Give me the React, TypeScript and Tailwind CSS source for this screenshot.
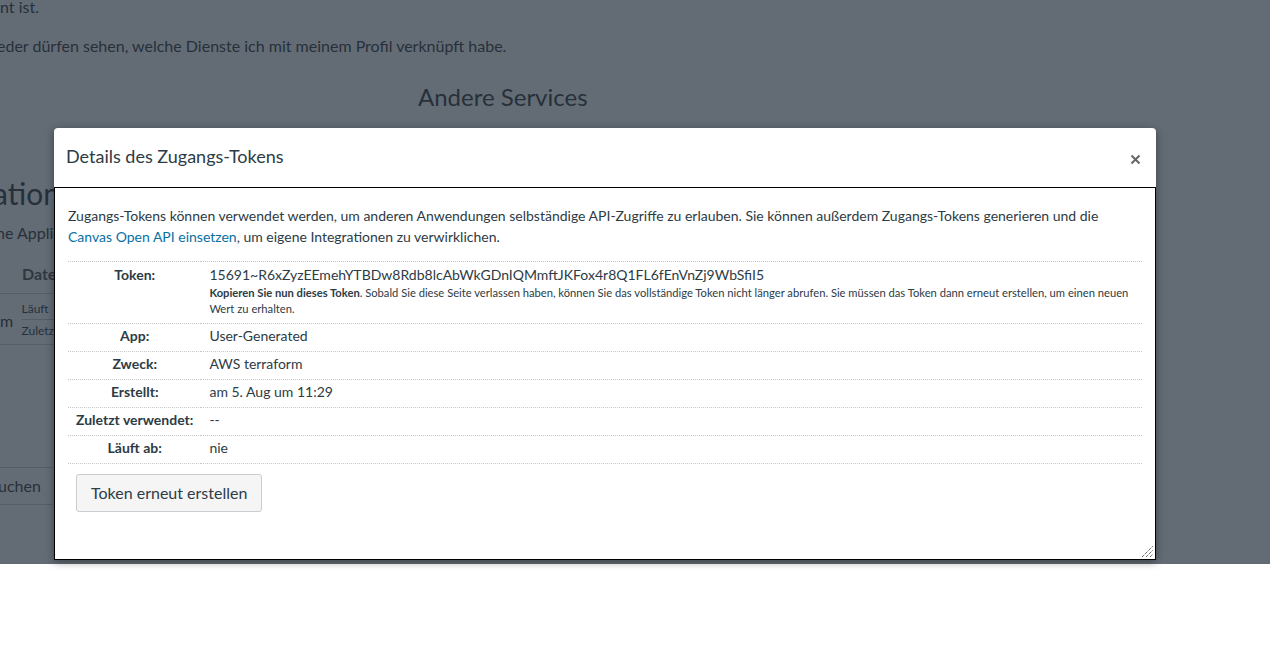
const rows = [
  { label: "App:", value: "User-Generated" },
  { label: "Zweck:", value: "AWS terraform" },
  { label: "Erstellt:", value: "am 5. Aug um 11:29" },
  { label: "Zuletzt verwendet:", value: "--" },
  { label: "Läuft ab:", value: "nie" },
];

const App = () => {
  return (
    <div className="relative w-[1270px] h-[648px] bg-white overflow-hidden font-['Lato','Liberation_Sans',sans-serif]">
      {/* page behind the overlay */}
      <div className="h-[564px] bg-[#636c75] text-[#27303a] overflow-hidden">
        <p className="mt-[-5px] text-[16px] leading-[24px]">nt ist.</p>
        <p className="mt-[15px] ml-[-3px] text-[16px] leading-[24px]">
          eder dürfen sehen, welche Dienste ich mit meinem Profil verknüpft habe.
        </p>
        <h2 className="mt-[24px] ml-[418px] text-[24px] leading-[30px]">
          Andere Services
        </h2>
        <h1 className="mt-[63px] ml-[-7px] text-[30px] leading-[36px]">
          ation
        </h1>
        <p className="mt-[10px] ml-[-4px] text-[16px] leading-[24px]">
          ne Applications
        </p>
        <div className="mt-[19px] w-[54px]">
          <div className="pl-[22px] pb-[9px] text-[16px] leading-[20px] font-bold text-[#2e3841]">
            Date
          </div>
          <div className="flex border-t border-[#545c64]">
            <div className="w-[22px] pt-[17px] text-[16px] leading-[20px]">m</div>
            <div className="flex-1">
              <div className="h-[26px] pt-[8px] text-[12px] leading-[14px] border-b border-[#545c64]">
                Läuft
              </div>
              <div className="h-[24px] pt-[4px] text-[12px] leading-[14px]">
                Zuletz
              </div>
            </div>
          </div>
          <div className="border-t border-[#545c64]" />
        </div>
        <div className="mt-[122px] w-[54px] h-[38px] border-y border-[#545c64] flex items-center text-[16px] ml-[-2px]">
          uchen
        </div>
      </div>

      {/* modal */}
      <div className="absolute left-[54px] top-[128px] w-[1102px] rounded-t-[4px] bg-white shadow-[0_2px_8px_rgba(0,0,0,0.4)] text-[#2d3b45]">
        <div className="h-[59px] flex items-center justify-between pl-3 pr-[15px]">
          <h2 className="mt-[-4px] text-[18px] leading-[24px] font-normal">
            Details des Zugangs-Tokens
          </h2>
          <button className="mt-[4px] text-[#666]">
            <svg width="11" height="11" viewBox="0 0 11 11">
              <path
                d="M1.5 1.5 L9.5 9.5 M9.5 1.5 L1.5 9.5"
                stroke="currentColor"
                strokeWidth="2"
              />
            </svg>
          </button>
        </div>
        <div className="relative h-[373px] border border-black px-[13px] pt-[17px]">
          <p className="text-[14px] leading-[21px] mb-[14px]">
            Zugangs-Tokens können verwendet werden, um anderen Anwendungen
            selbständige API-Zugriffe zu erlauben. Sie können außerdem
            Zugangs-Tokens generieren und die{" "}
            <span className="text-[#0770a3]">Canvas Open API einsetzen</span>,
            um eigene Integrationen zu verwirklichen.
          </p>
          <table className="w-full border-collapse text-[14px]">
            <tbody>
              <tr className="border-t border-dotted border-[#c7c7c7]">
                <th className="w-[133px] px-2 pt-[3px] align-top text-center font-bold leading-[19px]">
                  Token:
                </th>
                <td className="px-2 pt-[3px] pb-[6px] align-top text-left">
                  <div className="leading-[19px]">
                    15691~R6xZyzEEmehYTBDw8Rdb8lcAbWkGDnIQMmftJKFox4r8Q1FL6fEnVnZj9WbSfiI5
                  </div>
                  <div className="mt-[1px] text-[11.2px] leading-[16px]">
                    <strong>Kopieren Sie nun dieses Token</strong>. Sobald Sie
                    diese Seite verlassen haben, können Sie das vollständige
                    Token nicht länger abrufen. Sie müssen das Token dann erneut
                    erstellen, um einen neuen Wert zu erhalten.
                  </div>
                </td>
              </tr>
              {rows.map((row) => (
                <tr
                  key={row.label}
                  className="border-t border-dotted border-[#c7c7c7]"
                >
                  <th className="w-[133px] px-2 pt-[2px] pb-[6px] align-top text-center font-bold leading-[19px] whitespace-nowrap">
                    {row.label}
                  </th>
                  <td className="px-2 pt-[2px] pb-[6px] align-top text-left leading-[19px]">
                    {row.value}
                  </td>
                </tr>
              ))}
              <tr className="border-t border-dotted border-[#c7c7c7]">
                <td colSpan={2} className="p-0" />
              </tr>
            </tbody>
          </table>
          <button className="ml-2 mt-[10px] h-[38px] px-[14px] rounded-[3px] border border-[#c7cdd1] bg-[#f5f5f5] text-[16px] text-[#2d3b45]">
            Token erneut erstellen
          </button>
          <svg
            className="absolute right-[1px] bottom-[1px]"
            width="13"
            height="13"
            viewBox="0 0 13 13"
          >
            <path
              d="M1 12 L12 1 M5 12 L12 5 M9 12 L12 9"
              stroke="#222"
              strokeWidth="1"
              strokeDasharray="1 1"
            />
          </svg>
        </div>
      </div>
    </div>
  );
};

export default App;
